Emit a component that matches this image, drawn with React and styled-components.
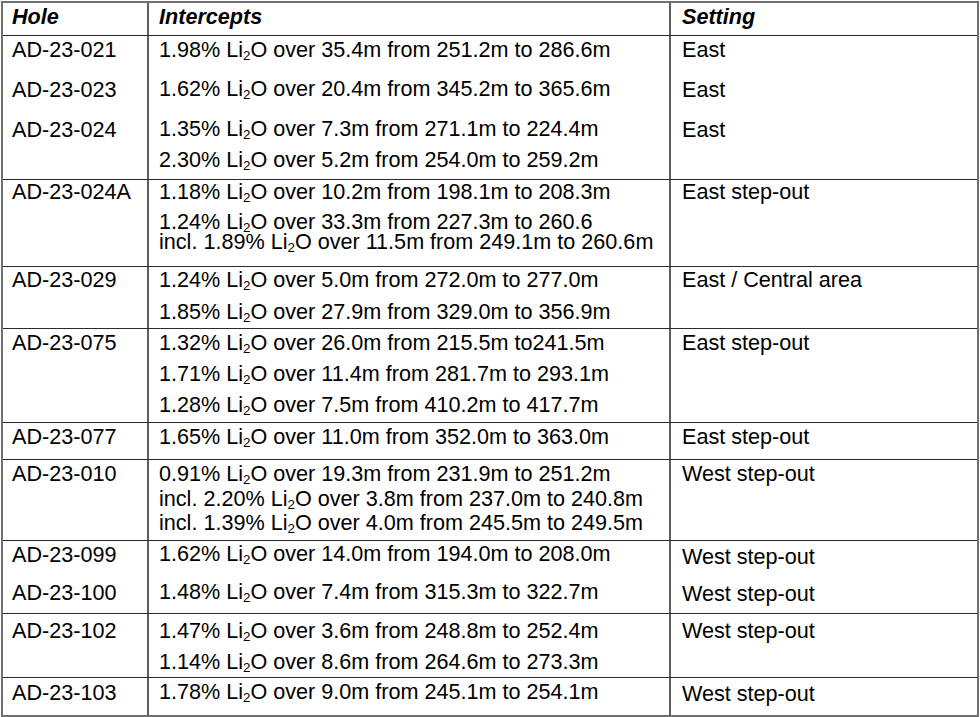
import React from 'react'
import styled, { createGlobalStyle } from 'styled-components'

const GlobalStyle = createGlobalStyle`
  html, body {
    margin: 0;
    padding: 0;
    background: #fff;
  }
  body {
    font-family: 'Liberation Sans', Arial, sans-serif;
    color: #000;
  }
`

const LH = 20

const Table = styled.div`
  width: 978px;
  margin: 1px 0 0 1px;
  border: 2px solid #6f6f6f;
  box-sizing: border-box;
  font-size: 21.6px;
`

const Row = styled.div`
  display: grid;
  grid-template-columns: 146px 522px 1fr;
  height: ${props => props.$h}px;
  box-sizing: border-box;
  border-top: ${props => (props.$first ? 'none' : '1px solid #2b2b2b')};
`

const Cell = styled.div`
  padding-left: ${props => props.$pad}px;
  border-right: ${props => (props.$last ? 'none' : '2px solid #5e5e5e')};
  overflow: hidden;
`

const Line = styled.div`
  height: ${LH}px;
  line-height: ${LH}px;
  margin-top: ${props => props.$gap}px;
  white-space: nowrap;
  font-style: ${props => (props.$head ? 'italic' : 'normal')};
  font-weight: ${props => (props.$head ? 700 : 400)};
`

const Sub = styled.sub`
  font-size: 0.62em;
  line-height: 0;
  vertical-align: -0.22em;
`

const chem = (text) => {
  const parts = text.split('Li2O')
  return parts.map((p, i) => (
    <React.Fragment key={i}>
      {p}
      {i < parts.length - 1 && <>Li<Sub>2</Sub>O</>}
    </React.Fragment>
  ))
}

const rows = [
  {
    h: 144,
    hole: [[14, 'AD-23-021'], [54, 'AD-23-023'], [94, 'AD-23-024']],
    ints: [
      [14, '1.98% Li2O over 35.4m from 251.2m to 286.6m'],
      [53, '1.62% Li2O over 20.4m from 345.2m to 365.6m'],
      [93, '1.35% Li2O over 7.3m from 271.1m to 224.4m'],
      [124, '2.30% Li2O over 5.2m from 254.0m to 259.2m']
    ],
    set: [[14, 'East'], [54, 'East'], [94, 'East']]
  },
  {
    h: 87,
    hole: [[12, 'AD-23-024A']],
    ints: [
      [12, '1.18% Li2O over 10.2m from 198.1m to 208.3m'],
      [42, '1.24% Li2O over 33.3m from 227.3m to 260.6'],
      [62, 'incl. 1.89% Li2O over 11.5m from 249.1m to 260.6m']
    ],
    set: [[12, 'East step-out']]
  },
  {
    h: 62,
    hole: [[13, 'AD-23-029']],
    ints: [
      [13, '1.24% Li2O over 5.0m from 272.0m to 277.0m'],
      [45, '1.85% Li2O over 27.9m from 329.0m to 356.9m']
    ],
    set: [[13, 'East / Central area']]
  },
  {
    h: 94,
    hole: [[14, 'AD-23-075']],
    ints: [
      [14, '1.32% Li2O over 26.0m from 215.5m to241.5m'],
      [45, '1.71% Li2O over 11.4m from 281.7m to 293.1m'],
      [76, '1.28% Li2O over 7.5m from 410.2m to 417.7m']
    ],
    set: [[14, 'East step-out']]
  },
  {
    h: 37,
    hole: [[14, 'AD-23-077']],
    ints: [[14, '1.65% Li2O over 11.0m from 352.0m to 363.0m']],
    set: [[14, 'East step-out']]
  },
  {
    h: 81,
    hole: [[14, 'AD-23-010']],
    ints: [
      [14, '0.91% Li2O over 19.3m from 231.9m to 251.2m'],
      [39, 'incl. 2.20% Li2O over 3.8m from 237.0m to 240.8m'],
      [63, 'incl. 1.39% Li2O over 4.0m from 245.5m to 249.5m']
    ],
    set: [[14, 'West step-out']]
  },
  {
    h: 73,
    hole: [[14, 'AD-23-099'], [52, 'AD-23-100']],
    ints: [
      [13, '1.62% Li2O over 14.0m from 194.0m to 208.0m'],
      [51, '1.48% Li2O over 7.4m from 315.3m to 322.7m']
    ],
    set: [[16, 'West step-out'], [53, 'West step-out']]
  },
  {
    h: 64,
    hole: [[17, 'AD-23-102']],
    ints: [
      [17, '1.47% Li2O over 3.6m from 248.8m to 252.4m'],
      [48, '1.14% Li2O over 8.6m from 264.6m to 273.3m']
    ],
    set: [[17, 'West step-out']]
  },
  {
    h: 38,
    hole: [[15, 'AD-23-103']],
    ints: [[14, '1.78% Li2O over 9.0m from 245.1m to 254.1m']],
    set: [[16, 'West step-out']]
  }
]

// turn centre offsets into stacked margins
const Lines = ({ items, head }) => {
  let prev = null
  return items.map(([y, text], i) => {
    const gap = prev === null ? y - LH / 2 : y - prev - LH
    prev = y
    return <Line key={i} $gap={gap} $head={head}>{chem(text)}</Line>
  })
}

export default function App () {
  return (
    <>
      <GlobalStyle />
      <Table>
        <Row $h={32} $first>
          <Cell $pad={9}><Lines head items={[[14, 'Hole']]} /></Cell>
          <Cell $pad={10}><Lines head items={[[14, 'Intercepts']]} /></Cell>
          <Cell $pad={11} $last><Lines head items={[[14, 'Setting']]} /></Cell>
        </Row>
        {rows.map((r, i) => (
          <Row key={i} $h={r.h}>
            <Cell $pad={9}><Lines items={r.hole} /></Cell>
            <Cell $pad={10}><Lines items={r.ints} /></Cell>
            <Cell $pad={11} $last><Lines items={r.set} /></Cell>
          </Row>
        ))}
      </Table>
    </>
  )
}
